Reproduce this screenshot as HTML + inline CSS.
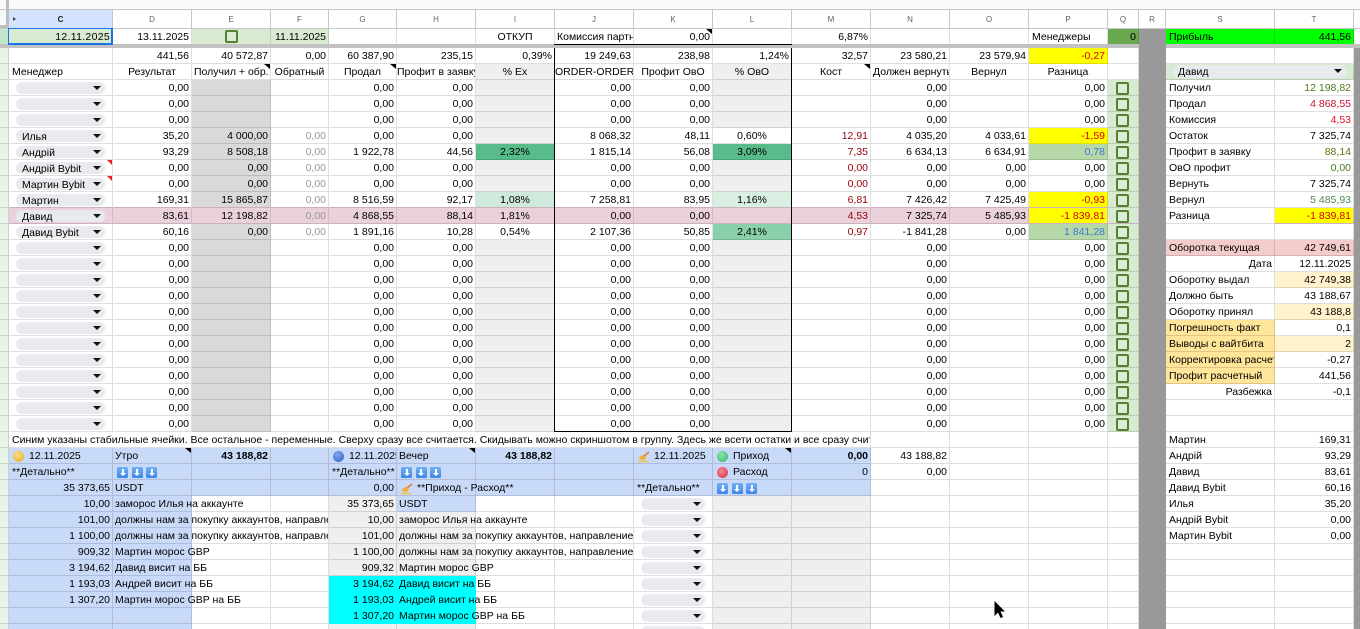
<!DOCTYPE html>
<html lang="ru"><head><meta charset="utf-8"><title>Sheet</title>
<style>
html,body{margin:0;padding:0;background:#fff;width:1360px;height:629px;overflow:hidden}
#w{position:relative;width:1360px;height:629px;overflow:hidden}
table{position:absolute;left:0;top:0;border-collapse:separate;border-spacing:0;table-layout:fixed;width:1360px;font:10.5px/13px "Liberation Sans","Noto Sans CJK SC",sans-serif;color:#000}
td{position:relative;box-sizing:border-box;height:16px;padding:2px 2px 0 2px;border-right:1px solid rgba(0,0,0,.13);border-bottom:1px solid rgba(0,0,0,.13);white-space:nowrap;text-align:right;vertical-align:top}
tr.hd td{height:19px;text-align:center;font-size:8px;color:#5f6368;line-height:17px;padding-top:1px;border-color:#c7c7c7}
tr.hd td.sel{background:#d3e3fd;color:#1f1f1f;font-weight:bold}
tr.r1 td{height:15px;border-bottom:0;line-height:13px}
tr.br td{height:4px;padding:0;border:0;background:#c2c2c2;line-height:0;font-size:0}
.a{background:#e6f4ea;padding:0}
.l{text-align:left}.c{text-align:center}.o{overflow:hidden}
.g{background:#d9d9d9}.e{background:#efefef}.b{background:#c9daf8}.y{background:#ff0}
.h{background:#999;border-color:#999;padding:0}
.q{background:#d9ead3;padding:0}
.q i,.ck{display:block;box-sizing:border-box;width:13px;height:13px;border:2px solid #548235;border-radius:2px;margin:2px 0 0 8px;background:#dcebd6}
.cy{background:#0ff;border-color:transparent}
tr.p td{background:#ead1dc;border-bottom-color:#c9b2bd;border-right-color:#d2bbc6}
tr.pre td{border-bottom-color:#c9b2bd}
tr.p td.y{background:#ff0}
tr.p td.q{background:#d9ead3}
tr.p td.h,tr.pre td.h{background:#999;border-color:#999}
tr.p td.w{background:#fff;border-bottom-color:rgba(0,0,0,.13);border-right-color:rgba(0,0,0,.13)}
tr.pre td.w{border-bottom-color:rgba(0,0,0,.13)}
.m{color:#999}.dr{color:#990000}.rd{color:#d80000}.bl{color:#3c78d8}
.d{position:relative;box-sizing:border-box;height:12px;line-height:14px;margin:2px 0 0 7px;width:89px;border-radius:6px;background:#e8eaed;padding-left:6px;text-align:left}
.d:after,.sc:after{content:"";position:absolute;right:4px;top:4px;border-left:4px solid transparent;border-right:4px solid transparent;border-top:4px solid #111}
.dk{width:64px;margin-left:7px}
.sc{position:relative;box-sizing:border-box;height:13px;line-height:15px;margin:1px 0 0 7px;width:174px;border-radius:7px;background:#e8eaed;padding-left:5px;text-align:left}
.sc:after{right:5px}
.cn:after{content:"";position:absolute;right:0;top:0;border-left:6px solid transparent;border-top:5px solid #000}
.cr:after{content:"";position:absolute;right:0;top:0;border-left:5px solid transparent;border-top:5px solid #e22}
.s{position:absolute;z-index:2;left:0;top:2px;height:13px;overflow:hidden;padding-left:2px;text-align:left}
.ball{position:absolute;top:3px;left:4px;width:11px;height:11px;border-radius:50%}
.by{background:radial-gradient(circle at 40% 35%,#ffdf7a,#e4a42c)}
.bb{background:radial-gradient(circle at 40% 35%,#7fa9ee,#2d5fc0)}
.bg{background:radial-gradient(circle at 40% 35%,#8fe6a8,#2fb26a)}
.br{background:radial-gradient(circle at 40% 35%,#f58a96,#d42a3a)}
.ar{position:relative;display:inline-block;width:11px;height:11px;margin:1px 3.5px 0 0;vertical-align:top;background:linear-gradient(#6fb0f5,#4186e6);border-radius:1px}
.ar:before{content:"";position:absolute;left:4.5px;top:2px;width:2px;height:4px;background:#fff}
.ar:after{content:"";position:absolute;left:2.5px;top:6px;border-left:3px solid transparent;border-right:3px solid transparent;border-top:3px solid #fff}
.hand{position:absolute;left:4px;top:3px}
.ov{position:absolute;background:#000}
</style></head><body><div id="w">
<table>
<colgroup><col style="width:9px"><col style="width:104px"><col style="width:79px"><col style="width:79px"><col style="width:58px"><col style="width:68px"><col style="width:79px"><col style="width:79px"><col style="width:79px"><col style="width:79px"><col style="width:79px"><col style="width:79px"><col style="width:79px"><col style="width:79px"><col style="width:79px"><col style="width:31px"><col style="width:27px"><col style="width:109px"><col style="width:79px"><col style="width:6px"></colgroup>
<tr><td colspan="20" style="height:10px;padding:0;background:#f8f9fa;border-right:0;border-bottom:1px solid #c7c7c7"></td></tr>
<tr class="hd"><td style="padding:0;background:#f8f9fa"></td><td class="sel">C</td><td>D</td><td>E</td><td>F</td><td>G</td><td>H</td><td>I</td><td>J</td><td>K</td><td>L</td><td>M</td><td>N</td><td>O</td><td>P</td><td>Q</td><td>R</td><td>S</td><td>T</td><td style="border-right:0"></td></tr>
<tr class="r1"><td class="a" style="background:#bfe6cb"></td><td style="background:#d9ead3;letter-spacing:.3px">12.11.2025</td><td>13.11.2025</td><td style="background:#d9ead3;padding:0"><span class="ck" style="margin:1px 0 0 33px"></span></td><td style="background:#d9ead3">11.11.2025</td><td></td><td></td><td class="c">ОТКУП</td><td class="l o">Комиссия партнера</td><td class="cn">0,00</td><td></td><td>6,87%</td><td></td><td></td><td class="l" style="padding-left:3px">Менеджеры</td><td style="background:#6aa84f">0</td><td class="h"></td><td class="l" style="background:#0f0;padding-left:3px">Прибыль</td><td style="background:#0f0">441,56</td><td style="border-right:0"></td></tr>
<tr class="br"><td colspan="16"></td><td style="background:#999"></td><td colspan="3"></td></tr>
<tr><td class="a"></td><td></td><td>441,56</td><td>40 572,87</td><td>0,00</td><td>60 387,90</td><td>235,15</td><td>0,39%</td><td>19 249,63</td><td>238,98</td><td>1,24%</td><td>32,57</td><td>23 580,21</td><td>23 579,94</td><td class="y rd">-0,27</td><td></td><td class="h"></td><td></td><td></td><td class="h"></td></tr>
<tr><td class="a"></td><td class="l" style="padding-left:3px">Менеджер</td><td class="c">Результат</td><td class="c cn">Получил + обр.</td><td class="c">Обратный</td><td class="c cn">Продал</td><td class="c o" style="padding-left:0;padding-right:0">Профит в заявку</td><td class="c e">% Ex</td><td class="c o" style="padding-left:0;padding-right:0">ORDER-ORDER</td><td class="c">Профит ОвО</td><td class="c e">% ОвО</td><td class="c cn">Кост</td><td class="c o">Должен вернуть</td><td class="c">Вернул</td><td class="c">Разница</td><td></td><td class="h"></td><td colspan="2" style="background:#d9ead3;padding:0"><div class="sc">Давид</div></td><td class="h"></td></tr>
<tr><td class="a"></td><td style="padding:0"><div class="d"></div></td><td>0,00</td><td class="g"></td><td></td><td>0,00</td><td>0,00</td><td class="e"></td><td>0,00</td><td>0,00</td><td class="e"></td><td></td><td>0,00</td><td></td><td>0,00</td><td class="q"><i></i></td><td class="h"></td><td class="l" style="padding-left:3px">Получил</td><td style="color:#4b7a1c">12 198,82</td><td class="h"></td></tr>
<tr><td class="a"></td><td style="padding:0"><div class="d"></div></td><td>0,00</td><td class="g"></td><td></td><td>0,00</td><td>0,00</td><td class="e"></td><td>0,00</td><td>0,00</td><td class="e"></td><td></td><td>0,00</td><td></td><td>0,00</td><td class="q"><i></i></td><td class="h"></td><td class="l" style="padding-left:3px">Продал</td><td style="color:#c8102e">4 868,55</td><td class="h"></td></tr>
<tr><td class="a"></td><td style="padding:0"><div class="d"></div></td><td>0,00</td><td class="g"></td><td></td><td>0,00</td><td>0,00</td><td class="e"></td><td>0,00</td><td>0,00</td><td class="e"></td><td></td><td>0,00</td><td></td><td>0,00</td><td class="q"><i></i></td><td class="h"></td><td class="l" style="padding-left:3px">Комиссия</td><td style="color:#e0102a">4,53</td><td class="h"></td></tr>
<tr><td class="a"></td><td style="padding:0"><div class="d">Илья</div></td><td>35,20</td><td class="g">4 000,00</td><td class="m">0,00</td><td>0,00</td><td>0,00</td><td class="e"></td><td>8 068,32</td><td>48,11</td><td class="c">0,60%</td><td class="dr">12,91</td><td>4 035,20</td><td>4 033,61</td><td class="y rd">-1,59</td><td class="q"><i></i></td><td class="h"></td><td class="l" style="padding-left:3px">Остаток</td><td>7 325,74</td><td class="h"></td></tr>
<tr><td class="a"></td><td style="padding:0"><div class="d">Андрій</div></td><td>93,29</td><td class="g">8 508,18</td><td class="m">0,00</td><td>1 922,78</td><td>44,56</td><td class="c" style="background:#57bb8a">2,32%</td><td>1 815,14</td><td>56,08</td><td class="c" style="background:#57bb8a">3,09%</td><td class="dr">7,35</td><td>6 634,13</td><td>6 634,91</td><td class="bl" style="background:#b6d7a8">0,78</td><td class="q"><i></i></td><td class="h"></td><td class="l" style="padding-left:3px">Профит в заявку</td><td style="color:#6b6a10">88,14</td><td class="h"></td></tr>
<tr><td class="a"></td><td style="padding:0" class="cr"><div class="d">Андрій Bybit</div></td><td>0,00</td><td class="g">0,00</td><td class="m">0,00</td><td>0,00</td><td>0,00</td><td class="e"></td><td>0,00</td><td>0,00</td><td class="e"></td><td class="dr">0,00</td><td>0,00</td><td>0,00</td><td>0,00</td><td class="q"><i></i></td><td class="h"></td><td class="l" style="padding-left:3px">ОвО профит</td><td style="color:#4b7a1c">0,00</td><td class="h"></td></tr>
<tr><td class="a"></td><td style="padding:0" class="cr"><div class="d">Мартин Bybit</div></td><td>0,00</td><td class="g">0,00</td><td class="m">0,00</td><td>0,00</td><td>0,00</td><td class="e"></td><td>0,00</td><td>0,00</td><td class="e"></td><td class="dr">0,00</td><td>0,00</td><td>0,00</td><td>0,00</td><td class="q"><i></i></td><td class="h"></td><td class="l" style="padding-left:3px">Вернуть</td><td>7 325,74</td><td class="h"></td></tr>
<tr class="pre"><td class="a w"></td><td style="padding:0"><div class="d">Мартин</div></td><td>169,31</td><td class="g">15 865,87</td><td class="m">0,00</td><td>8 516,59</td><td>92,17</td><td class="c" style="background:#cfe9dc">1,08%</td><td>7 258,81</td><td>83,95</td><td class="c" style="background:#d8efe2">1,16%</td><td class="dr">6,81</td><td>7 426,42</td><td>7 425,49</td><td class="y rd">-0,93</td><td class="q w"><i></i></td><td class="h"></td><td class="l w" style="padding-left:3px">Вернул</td><td class="w" style="color:#4f8a52">5 485,93</td><td class="h"></td></tr>
<tr class="p"><td class="a" style="background:#e6f4ea;border-color:rgba(0,0,0,.13)"></td><td style="padding:0"><div class="d">Давид</div></td><td>83,61</td><td>12 198,82</td><td class="m">0,00</td><td>4 868,55</td><td>88,14</td><td class="c">1,81%</td><td>0,00</td><td>0,00</td><td></td><td class="dr">4,53</td><td>7 325,74</td><td>5 485,93</td><td class="y rd">-1 839,81</td><td class="q"><i></i></td><td class="h"></td><td class="l w" style="padding-left:3px">Разница</td><td class="y rd">-1 839,81</td><td class="h"></td></tr>
<tr><td class="a"></td><td style="padding:0"><div class="d">Давид Bybit</div></td><td>60,16</td><td class="g">0,00</td><td class="m">0,00</td><td>1 891,16</td><td>10,28</td><td class="c">0,54%</td><td>2 107,36</td><td>50,85</td><td class="c" style="background:#8ad0a9">2,41%</td><td class="dr">0,97</td><td>-1 841,28</td><td>0,00</td><td class="bl" style="background:#b6d7a8">1 841,28</td><td class="q"><i></i></td><td class="h"></td><td></td><td></td><td class="h"></td></tr>
<tr><td class="a"></td><td style="padding:0"><div class="d"></div></td><td>0,00</td><td class="g"></td><td></td><td>0,00</td><td>0,00</td><td class="e"></td><td>0,00</td><td>0,00</td><td class="e"></td><td></td><td>0,00</td><td></td><td>0,00</td><td class="q"><i></i></td><td class="h"></td><td class="l" style="background:#f4cccc;padding-left:3px">Оборотка текущая</td><td style="background:#f4cccc">42 749,61</td><td class="h"></td></tr>
<tr><td class="a"></td><td style="padding:0"><div class="d"></div></td><td>0,00</td><td class="g"></td><td></td><td>0,00</td><td>0,00</td><td class="e"></td><td>0,00</td><td>0,00</td><td class="e"></td><td></td><td>0,00</td><td></td><td>0,00</td><td class="q"><i></i></td><td class="h"></td><td>Дата</td><td>12.11.2025</td><td class="h"></td></tr>
<tr><td class="a"></td><td style="padding:0"><div class="d"></div></td><td>0,00</td><td class="g"></td><td></td><td>0,00</td><td>0,00</td><td class="e"></td><td>0,00</td><td>0,00</td><td class="e"></td><td></td><td>0,00</td><td></td><td>0,00</td><td class="q"><i></i></td><td class="h"></td><td class="l" style="padding-left:3px">Оборотку выдал</td><td style="background:#fff2cc">42 749,38</td><td class="h"></td></tr>
<tr><td class="a"></td><td style="padding:0"><div class="d"></div></td><td>0,00</td><td class="g"></td><td></td><td>0,00</td><td>0,00</td><td class="e"></td><td>0,00</td><td>0,00</td><td class="e"></td><td></td><td>0,00</td><td></td><td>0,00</td><td class="q"><i></i></td><td class="h"></td><td class="l" style="padding-left:3px">Должно быть</td><td>43 188,67</td><td class="h"></td></tr>
<tr><td class="a"></td><td style="padding:0"><div class="d"></div></td><td>0,00</td><td class="g"></td><td></td><td>0,00</td><td>0,00</td><td class="e"></td><td>0,00</td><td>0,00</td><td class="e"></td><td></td><td>0,00</td><td></td><td>0,00</td><td class="q"><i></i></td><td class="h"></td><td class="l" style="padding-left:3px">Оборотку принял</td><td style="background:#fff2cc">43 188,8</td><td class="h"></td></tr>
<tr><td class="a"></td><td style="padding:0"><div class="d"></div></td><td>0,00</td><td class="g"></td><td></td><td>0,00</td><td>0,00</td><td class="e"></td><td>0,00</td><td>0,00</td><td class="e"></td><td></td><td>0,00</td><td></td><td>0,00</td><td class="q"><i></i></td><td class="h"></td><td class="l" style="background:#ffe599;padding-left:3px">Погрешность факт</td><td>0,1</td><td class="h"></td></tr>
<tr><td class="a"></td><td style="padding:0"><div class="d"></div></td><td>0,00</td><td class="g"></td><td></td><td>0,00</td><td>0,00</td><td class="e"></td><td>0,00</td><td>0,00</td><td class="e"></td><td></td><td>0,00</td><td></td><td>0,00</td><td class="q"><i></i></td><td class="h"></td><td class="l" style="background:#ffe599;padding-left:3px">Выводы с вайтбита</td><td style="background:#fff2cc">2</td><td class="h"></td></tr>
<tr><td class="a"></td><td style="padding:0"><div class="d"></div></td><td>0,00</td><td class="g"></td><td></td><td>0,00</td><td>0,00</td><td class="e"></td><td>0,00</td><td>0,00</td><td class="e"></td><td></td><td>0,00</td><td></td><td>0,00</td><td class="q"><i></i></td><td class="h"></td><td class="l o" style="background:#ffe599;padding-left:3px;padding-right:0">Корректировка расчетная</td><td>-0,27</td><td class="h"></td></tr>
<tr><td class="a"></td><td style="padding:0"><div class="d"></div></td><td>0,00</td><td class="g"></td><td></td><td>0,00</td><td>0,00</td><td class="e"></td><td>0,00</td><td>0,00</td><td class="e"></td><td></td><td>0,00</td><td></td><td>0,00</td><td class="q"><i></i></td><td class="h"></td><td class="l" style="background:#ffe599;padding-left:3px">Профит расчетный</td><td>441,56</td><td class="h"></td></tr>
<tr><td class="a"></td><td style="padding:0"><div class="d"></div></td><td>0,00</td><td class="g"></td><td></td><td>0,00</td><td>0,00</td><td class="e"></td><td>0,00</td><td>0,00</td><td class="e"></td><td></td><td>0,00</td><td></td><td>0,00</td><td class="q"><i></i></td><td class="h"></td><td>Разбежка</td><td>-0,1</td><td class="h"></td></tr>
<tr><td class="a"></td><td style="padding:0"><div class="d"></div></td><td>0,00</td><td class="g"></td><td></td><td>0,00</td><td>0,00</td><td class="e"></td><td>0,00</td><td>0,00</td><td class="e"></td><td></td><td>0,00</td><td></td><td>0,00</td><td class="q"><i></i></td><td class="h"></td><td></td><td></td><td class="h"></td></tr>
<tr><td class="a"></td><td style="padding:0"><div class="d"></div></td><td>0,00</td><td class="g"></td><td></td><td>0,00</td><td>0,00</td><td class="e"></td><td>0,00</td><td>0,00</td><td class="e"></td><td></td><td>0,00</td><td></td><td>0,00</td><td class="q"><i></i></td><td class="h"></td><td></td><td></td><td class="h"></td></tr>
<tr><td class="a"></td><td colspan="11" class="l o" style="padding-left:3px;padding-right:0">Синим указаны стабильные ячейки. Все остальное - переменные. Сверху сразу все считается. Скидывать можно скриншотом в группу. Здесь же всети остатки и все сразу считается</td><td></td><td></td><td></td><td></td><td class="h"></td><td class="l" style="padding-left:3px">Мартин</td><td>169,31</td><td class="h"></td></tr>
<tr><td class="a"></td><td class="b l" style="padding-left:20px"><span class="ball by"></span>12.11.2025</td><td class="b l cn">Утро</td><td class="b"><b>43 188,82</b></td><td class="b"></td><td class="b l o" style="padding-left:20px;padding-right:0"><span class="ball bb"></span>12.11.2025</td><td class="b l cn">Вечер</td><td class="b"><b>43 188,82</b></td><td class="b"></td><td class="b l" style="padding-left:20px"><svg class="hand" width="13" height="12" viewBox="0 0 13 12"><path d="M1 8C1 6 3 4 5 4L8 6C8 8 6 9 4 9Z" fill="#f2b13c"/><path d="M6 5L11 1" stroke="#e0782a" stroke-width="1.500"/><path d="M0 10.500H10" stroke="#f5c04a" stroke-width="1.500"/></svg>12.11.2025</td><td class="b l cn" style="padding-left:20px"><span class="ball bg"></span>Приход</td><td class="b"><b>0,00</b></td><td>43 188,82</td><td></td><td></td><td></td><td class="h"></td><td class="l" style="padding-left:3px">Андрій</td><td>93,29</td><td class="h"></td></tr>
<tr><td class="a"></td><td class="b l" style="padding-left:3px">**Детально**</td><td class="b l" style="padding-left:4px"><span class="ar"></span><span class="ar"></span><span class="ar"></span></td><td class="b"></td><td class="b"></td><td class="b l o" style="padding-left:3px;padding-right:0">**Детально**</td><td class="b l" style="padding-left:4px"><span class="ar"></span><span class="ar"></span><span class="ar"></span></td><td class="b"></td><td class="b"></td><td class="b"></td><td class="b l" style="padding-left:20px"><span class="ball br"></span>Расход</td><td class="b">0</td><td>0,00</td><td></td><td></td><td></td><td class="h"></td><td class="l" style="padding-left:3px">Давид</td><td>83,61</td><td class="h"></td></tr>
<tr><td class="a"></td><td class="b">35 373,65</td><td class="b l">USDT</td><td class="b"></td><td class="b"></td><td class="b">0,00</td><td class="b"><svg class="hand" width="13" height="12" viewBox="0 0 13 12"><path d="M1 8C1 6 3 4 5 4L8 6C8 8 6 9 4 9Z" fill="#f2b13c"/><path d="M6 5L11 1" stroke="#e0782a" stroke-width="1.500"/><path d="M0 10.500H10" stroke="#f5c04a" stroke-width="1.500"/></svg><div class="s" style="width:214px;padding-left:20px">**Приход - Расход**</div></td><td class="b"></td><td class="b"></td><td class="b l" style="padding-left:3px">**Детально**</td><td class="b l" style="padding-left:4px"><span class="ar"></span><span class="ar"></span><span class="ar"></span></td><td class="b"></td><td></td><td></td><td></td><td></td><td class="h"></td><td class="l" style="padding-left:3px">Давид Bybit</td><td>60,16</td><td class="h"></td></tr>
<tr><td class="a"></td><td class="b">10,00</td><td class="b"><div class="s" style="width:213px">заморос Илья на аккаунте</div></td><td></td><td></td><td class="e">35 373,65</td><td class="b l">USDT</td><td></td><td></td><td style="padding:0"><div class="d dk"></div></td><td class="e"></td><td class="e"></td><td></td><td></td><td></td><td></td><td class="h"></td><td class="l" style="padding-left:3px">Илья</td><td>35,20</td><td class="h"></td></tr>
<tr><td class="a"></td><td class="b">101,00</td><td class="b"><div class="s" style="width:213px">должны нам за покупку аккаунтов, направление</div></td><td></td><td></td><td class="e">10,00</td><td class="e"><div class="s" style="width:234px">заморос Илья на аккаунте</div></td><td></td><td></td><td style="padding:0"><div class="d dk"></div></td><td class="e"></td><td class="e"></td><td></td><td></td><td></td><td></td><td class="h"></td><td class="l" style="padding-left:3px">Андрій Bybit</td><td>0,00</td><td class="h"></td></tr>
<tr><td class="a"></td><td class="b">1 100,00</td><td class="b"><div class="s" style="width:213px">должны нам за покупку аккаунтов, направление</div></td><td></td><td></td><td class="e">101,00</td><td class="e"><div class="s" style="width:234px">должны нам за покупку аккаунтов, направление</div></td><td></td><td></td><td style="padding:0"><div class="d dk"></div></td><td class="e"></td><td class="e"></td><td></td><td></td><td></td><td></td><td class="h"></td><td class="l" style="padding-left:3px">Мартин Bybit</td><td>0,00</td><td class="h"></td></tr>
<tr><td class="a"></td><td class="b">909,32</td><td class="b"><div class="s" style="width:213px">Мартин морос GBP</div></td><td></td><td></td><td class="e">1 100,00</td><td class="e"><div class="s" style="width:234px">должны нам за покупку аккаунтов, направление</div></td><td></td><td></td><td style="padding:0"><div class="d dk"></div></td><td class="e"></td><td class="e"></td><td></td><td></td><td></td><td></td><td class="h"></td><td></td><td></td><td class="h"></td></tr>
<tr><td class="a"></td><td class="b">3 194,62</td><td class="b"><div class="s" style="width:213px">Давид висит на ББ</div></td><td></td><td></td><td class="e">909,32</td><td class="e"><div class="s" style="width:234px">Мартин морос GBP</div></td><td></td><td></td><td style="padding:0"><div class="d dk"></div></td><td class="e"></td><td class="e"></td><td></td><td></td><td></td><td></td><td class="h"></td><td></td><td></td><td class="h"></td></tr>
<tr><td class="a"></td><td class="b">1 193,03</td><td class="b"><div class="s" style="width:213px">Андрей висит на ББ</div></td><td></td><td></td><td class="cy">3 194,62</td><td class="cy"><div class="s" style="width:234px">Давид висит на ББ</div></td><td></td><td></td><td style="padding:0"><div class="d dk"></div></td><td class="e"></td><td class="e"></td><td></td><td></td><td></td><td></td><td class="h"></td><td></td><td></td><td class="h"></td></tr>
<tr><td class="a"></td><td class="b">1 307,20</td><td class="b"><div class="s" style="width:213px">Мартин морос GBP на ББ</div></td><td></td><td></td><td class="cy">1 193,03</td><td class="cy"><div class="s" style="width:234px">Андрей висит на ББ</div></td><td></td><td></td><td style="padding:0"><div class="d dk"></div></td><td class="e"></td><td class="e"></td><td></td><td></td><td></td><td></td><td class="h"></td><td></td><td></td><td class="h"></td></tr>
<tr><td class="a"></td><td class="b"></td><td class="b"></td><td></td><td></td><td class="cy">1 307,20</td><td class="cy"><div class="s" style="width:234px">Мартин морос GBP на ББ</div></td><td></td><td></td><td style="padding:0"><div class="d dk"></div></td><td class="e"></td><td class="e"></td><td></td><td></td><td></td><td></td><td class="h"></td><td></td><td></td><td class="h"></td></tr>
<tr><td class="a"></td><td class="b"></td><td class="b"></td><td></td><td></td><td class="e"></td><td class="e"></td><td></td><td></td><td style="padding:0"><div class="d dk"></div></td><td class="e"></td><td class="e"></td><td></td><td></td><td></td><td></td><td class="h"></td><td></td><td></td><td class="h"></td></tr>
</table>
<div style="position:absolute;z-index:5;left:6px;top:0;width:3px;height:25px;background:#bdbdbd"></div>
<div style="position:absolute;z-index:5;left:0;top:25px;width:9px;height:3px;background:#bdbdbd"></div>
<div style="position:absolute;z-index:5;left:13px;top:17px;border-top:2.500px solid transparent;border-bottom:2.500px solid transparent;border-left:3px solid #444"></div>
<div style="position:absolute;z-index:5;left:8px;top:28px;width:105px;height:17px;box-sizing:border-box;border:2px solid #1a73e8;border-width:1px 2px 2px 1px"></div>
<div class="ov" style="z-index:5;left:554px;top:44px;width:238px;height:1px"></div>
<div class="ov" style="z-index:5;left:554px;top:48px;width:1px;height:384px"></div>
<div class="ov" style="z-index:5;left:791px;top:48px;width:1px;height:384px"></div>
<div class="ov" style="z-index:5;left:554px;top:431px;width:238px;height:1px"></div>
<svg style="position:absolute;z-index:5;left:994px;top:601px" width="12" height="18" viewBox="0 0 12 18"><path d="M0.500 0V15L4 11.500L6.500 17L9 16L6.500 10.500H11Z" fill="#000"/></svg>
</div></body></html>
